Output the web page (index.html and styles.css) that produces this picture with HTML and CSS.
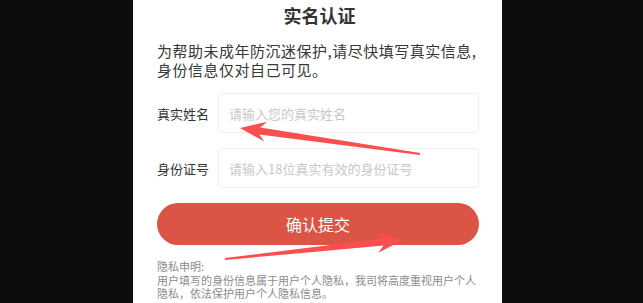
FILE: index.html
```html
<!DOCTYPE html>
<html lang="zh-CN">

<head>
    <meta charset="UTF-8">
    <meta name="viewport" content="width=device-width, initial-scale=1.0">
    <title>实名认证</title>
    <link rel="stylesheet" href="styles.css">
</head>

<body>
    <div class="stage">
        <div class="panel">
            <h1 class="panel_title">实名认证</h1>
            <p class="panel_desc">为帮助未成年防沉迷保护,请尽快填写真实信息,身份信息仅对自己可见。</p>
            <form action="#" class="auth_form">
                <div class="form_row">
                    <label for="realname">真实姓名</label>
                    <input type="text" id="realname" placeholder="请输入您的真实姓名">
                </div>
                <div class="form_row">
                    <label for="idcard">身份证号</label>
                    <input type="text" id="idcard" placeholder="请输入18位真实有效的身份证号">
                </div>
                <button type="button" class="submit_btn">确认提交</button>
            </form>
            <div class="privacy">
                <p>隐私申明:</p>
                <p>用户填写的身份信息属于用户个人隐私，我司将高度重视用户个人隐私，依法保护用户个人隐私信息。</p>
            </div>
        </div>

        <!-- 标注箭头 -->
        <svg class="marks" width="643" height="303" viewBox="0 0 643 303">
            <polygon points="420.1,153 260.3,127.4 267.1,121.8 240,128 264.3,141.6 259.3,134.4 419.9,155" />
            <polygon points="225.1,260 383.5,245.6 378.3,252.7 403,240 376.1,232.9 382.7,238.6 224.9,258" />
        </svg>
    </div>
</body>

</html>
```

FILE: styles.css
```css
* {
    margin: 0;
    padding: 0;
    box-sizing: border-box;
}

body {
    background-color: #0e0d0e;
    font-family: "Noto Sans CJK SC", "Noto Sans", sans-serif;
    color: #333;
    height: 303px;
    overflow: hidden;
}

.stage {
    position: relative;
    height: 303px;
}

.panel {
    width: 369px;
    height: 303px;
    margin-left: 133px;
    padding: 0 20px 0 24px;
    background-color: #fff;
}

.panel_title {
    font-size: 18px;
    line-height: 30px;
    text-align: center;
    font-weight: bold;
    color: #333;
}

.panel_desc {
    margin-top: 11px;
    font-size: 15px;
    line-height: 19px;
    letter-spacing: 0.5px;
    color: #383838;
}

.auth_form {
    margin-top: 14px;
    margin-right: 3px;
}

.form_row {
    display: flex;
    align-items: center;
    margin-bottom: 15px;
}

.form_row label {
    width: 61px;
    flex-shrink: 0;
    font-size: 13px;
    color: #333;
}

.form_row input {
    flex-grow: 1;
    height: 40px;
    padding: 0 10px;
    border: 1px solid #efefef;
    border-radius: 4px;
    font: 13px "Noto Sans CJK SC", sans-serif;
    color: #333;
    outline: none;
}

.form_row input::placeholder {
    color: #c8c8c8;
}

.submit_btn {
    display: block;
    width: 100%;
    height: 42px;
    margin-top: 1px;
    border: none;
    border-radius: 21px;
    background-color: #dc5445;
    color: #fff;
    font: 16px "Noto Sans CJK SC", sans-serif;
}

.privacy {
    margin-top: 15px;
    margin-right: 3px;
    font-size: 11px;
    line-height: 13.5px;
    color: #8c8c8c;
}

/* 箭头 */

.marks {
    position: absolute;
    left: 0;
    top: 0;
    pointer-events: none;
}

.marks polygon {
    fill: #fb4e4f;
}
```
